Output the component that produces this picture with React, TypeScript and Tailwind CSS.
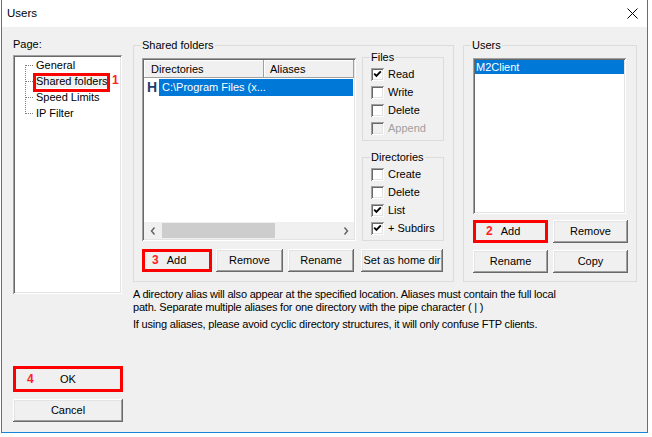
import React from "react";

// classic win32 bevels
const raised =
  "shadow-[inset_-1px_-1px_#696969,inset_1px_1px_#ffffff,inset_-2px_-2px_#a0a0a0,inset_2px_2px_#e3e3e3]";
const sunken =
  "shadow-[inset_1px_1px_#a0a0a0,inset_-1px_-1px_#ffffff,inset_2px_2px_#696969,inset_-2px_-2px_#e3e3e3]";
const headerCell = "shadow-[inset_-1px_-1px_#a0a0a0,inset_1px_1px_#ffffff]";

function Group({ label, className, children }: { label: string; className: string; children: React.ReactNode }) {
  return (
    <div className={`relative border border-[#dcdcdc] ${className}`}>
      <span className="absolute -top-[7px] left-[7px] bg-[#f0f0f0] px-[1px] leading-[13px]">{label}</span>
      {children}
    </div>
  );
}

function Btn({ className, children }: { className: string; children: React.ReactNode }) {
  return (
    <div className={`flex h-[23px] items-center justify-center bg-[#f0f0f0] ${raised} ${className}`}>{children}</div>
  );
}

function MarkedBtn({ num, className, numPad }: { num: string; className: string; numPad: string }) {
  return (
    <div className={`flex h-[23px] items-center border-[3px] border-[#ff0000] bg-[#f0f0f0] ${numPad} ${className}`}>
      <span className="text-[12px] font-bold text-[#ff2020]">{num}</span>
      <span className="ml-[8px]">Add</span>
    </div>
  );
}

function Check({ label, checked, disabled }: { label: string; checked?: boolean; disabled?: boolean }) {
  return (
    <div className="flex h-[18px] items-center">
      <span
        className={`flex h-[13px] w-[13px] items-center justify-center ${disabled ? "bg-[#f0f0f0]" : "bg-white"} ${sunken}`}
      >
        {checked && (
          <svg width="9" height="9" viewBox="0 0 9 9">
            <path d="M1.2 3.6 L3.4 5.8 L7.8 1.4" fill="none" stroke="#000" strokeWidth="1.9" />
          </svg>
        )}
      </span>
      <span className={`ml-[4px] ${disabled ? "text-[#a0a0a0]" : "text-black"}`}>{label}</span>
    </div>
  );
}

function TreeRow({ label, pos, marked }: { label: string; pos: "first" | "mid" | "last"; marked?: boolean }) {
  return (
    <div className="flex h-[16px] items-center">
      <svg width="9" height="16" viewBox="0 0 9 16" className="shrink-0" shapeRendering="crispEdges">
        <line
          x1="1.5"
          x2="1.5"
          y1={pos === "first" ? 8 : 0}
          y2={pos === "last" ? 9 : 16}
          stroke="#808080"
          strokeDasharray="1 1"
        />
        <line x1="2" x2="9" y1="8.5" y2="8.5" stroke="#808080" strokeDasharray="1 1" />
      </svg>
      <span className={`relative pl-[3px] pr-[2px] ${marked ? "bg-[#f0f0f0]" : ""}`}>
        {label}
        {marked && (
          <>
            <span className="absolute -top-[2px] left-0 h-[19px] w-[77px] border-[3px] border-[#ff0000]" />
            <span className="absolute -top-[1px] left-[79px] text-[12px] font-bold text-[#ff2020]">1</span>
          </>
        )}
      </span>
    </div>
  );
}

function Chevron({ dir }: { dir: "l" | "r" }) {
  return (
    <svg width="6" height="8" viewBox="0 0 6 8">
      <path d={dir === "l" ? "M4.5 0.5 L1.5 4 L4.5 7.5" : "M1.5 0.5 L4.5 4 L1.5 7.5"} fill="none" stroke="#606060" strokeWidth="1.4" />
    </svg>
  );
}

export default function App() {
  return (
    <div className="h-[437px] w-[652px] overflow-hidden bg-white font-['Liberation_Sans',Arial,sans-serif] text-[11px] leading-[13px] text-black">
      <div className="ml-[1px] flex h-[433px] w-[647px] flex-col border-x border-b border-[#1883d7]">
        {/* title bar */}
        <div className="flex h-[27px] shrink-0 items-center justify-between bg-white pl-[5px] pr-[9px]">
          <span className="text-[11.5px]">Users</span>
          <svg width="11" height="11" viewBox="0 0 11 11">
            <path d="M0.5 0.5 L10.5 10.5 M10.5 0.5 L0.5 10.5" stroke="#000" strokeWidth="1" />
          </svg>
        </div>

        {/* body */}
        <div className="flex flex-1 bg-[#f0f0f0] pl-[11px]">
          {/* left column */}
          <div className="flex w-[109px] shrink-0 flex-col pt-[11px]">
            <span>Page:</span>
            <div className={`mt-[4px] h-[239px] bg-white pl-[11px] pt-[2px] ${sunken}`}>
              <TreeRow label="General" pos="first" />
              <TreeRow label="Shared folders" pos="mid" marked />
              <TreeRow label="Speed Limits" pos="mid" />
              <TreeRow label="IP Filter" pos="last" />
            </div>
            <div className="relative mt-[72px] flex h-[26px] w-[110px] items-center justify-center border-[3px] border-[#ff0000] bg-[#f0f0f0]">
              <span className="absolute left-[11px] text-[12px] font-bold text-[#ff2020]">4</span>
              <span>OK</span>
            </div>
            <Btn className="mt-[7px] w-[110px]">Cancel</Btn>
          </div>

          {/* middle column */}
          <div className="ml-[11px] flex w-[321px] shrink-0 flex-col pt-[18px]">
            <Group label="Shared folders" className="h-[237px] w-[321px] pl-[8px] pt-[12px]">
              <div className="flex">
                <div className={`flex h-[183px] w-[214px] flex-col bg-white p-[2px] ${sunken}`}>
                  <div className="flex h-[18px] shrink-0">
                    <div className={`flex w-[120px] items-center bg-[#f0f0f0] pl-[7px] ${headerCell}`}>Directories</div>
                    <div className={`flex flex-1 items-center bg-[#f0f0f0] pl-[6px] ${headerCell}`}>Aliases</div>
                  </div>
                  <div className="mt-[1px] flex h-[17px] items-center">
                    <span className="w-[15px] pl-[3px] text-[14px] font-bold leading-[17px] text-[#1f3d6b]">H</span>
                    <span className="mr-[1px] flex h-[17px] flex-1 items-center bg-[#0078d7] pl-[3px] text-white">
                      C:\Program Files (x...
                    </span>
                  </div>
                  <div className="flex-1" />
                  <div className="flex h-[17px] items-center bg-[#f0f0f0]">
                    <span className="flex w-[17px] justify-center">
                      <Chevron dir="l" />
                    </span>
                    <span className="ml-[1px] h-[15px] w-[113px] bg-[#cdcdcd]" />
                    <span className="flex-1" />
                    <span className="flex w-[17px] justify-center">
                      <Chevron dir="r" />
                    </span>
                  </div>
                </div>
                <div className="ml-[6px] -mt-[1px] flex w-[82px] flex-col">
                  <Group label="Files" className="h-[84px] pl-[8px] pt-[7px]">
                    <Check label="Read" checked />
                    <Check label="Write" />
                    <Check label="Delete" />
                    <Check label="Append" disabled />
                  </Group>
                  <Group label="Directories" className="mt-[16px] h-[84px] pl-[8px] pt-[7px]">
                    <Check label="Create" />
                    <Check label="Delete" />
                    <Check label="List" checked />
                    <Check label="+ Subdirs" checked />
                  </Group>
                </div>
              </div>
              <div className="mt-[8px] flex">
                <MarkedBtn num="3" numPad="pl-[7px]" className="w-[70px]" />
                <Btn className="ml-[4px] w-[67px]">Remove</Btn>
                <Btn className="ml-[5px] w-[66px]">Rename</Btn>
                <Btn className="ml-[7px] w-[82px]">Set as home dir</Btn>
              </div>
            </Group>
            <div className="mt-[6px] whitespace-nowrap tracking-[-0.2px]">
              <p>
                A directory alias will also appear at the specified location. Aliases must contain the full local
                <br />
                path. Separate multiple aliases for one directory with the pipe character ( | )
              </p>
              <p className="mt-[4px]">
                If using aliases, please avoid cyclic directory structures, it will only confuse FTP clients.
              </p>
            </div>
          </div>

          {/* right column */}
          <div className="ml-[9px] shrink-0 pt-[18px]">
            <Group label="Users" className="h-[237px] w-[174px] pl-[9px] pt-[12px]">
              <div className={`h-[156px] w-[153px] bg-white p-[2px] ${sunken}`}>
                <div className="flex h-[14px] items-center bg-[#0078d7] pl-[1px] text-white">M2Client</div>
              </div>
              <div className="mt-[6px] flex">
                <MarkedBtn num="2" numPad="pl-[10px]" className="w-[75px]" />
                <Btn className="ml-[5px] w-[75px]">Remove</Btn>
              </div>
              <div className="mt-[7px] flex">
                <Btn className="w-[75px]">Rename</Btn>
                <Btn className="ml-[5px] w-[75px]">Copy</Btn>
              </div>
            </Group>
          </div>
        </div>
      </div>
    </div>
  );
}
